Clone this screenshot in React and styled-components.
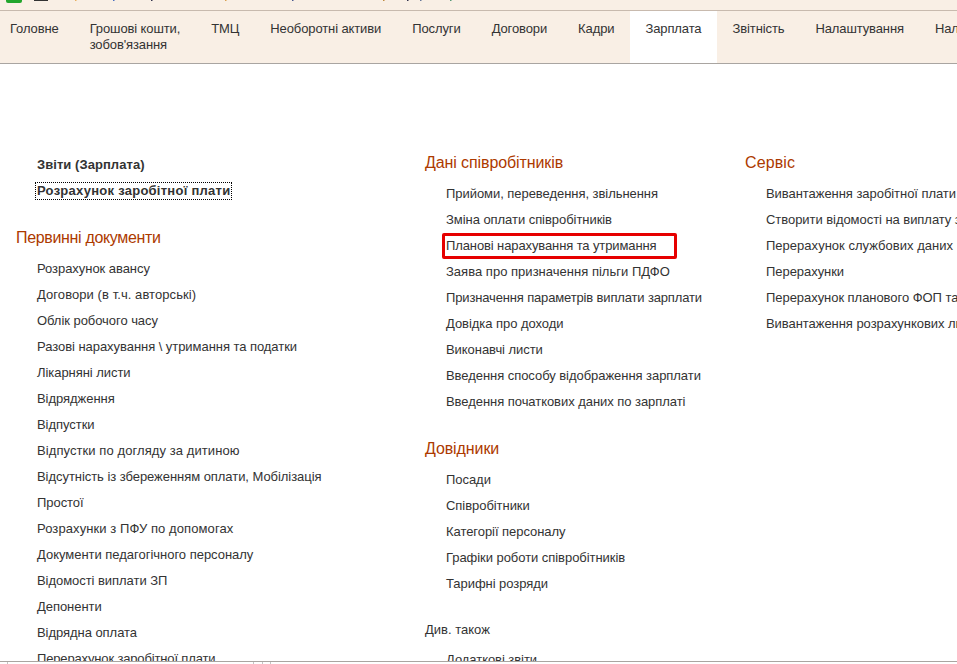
import React from "react";
import styled, { createGlobalStyle } from "styled-components";

const GlobalStyle = createGlobalStyle`
  html, body {
    margin: 0;
    padding: 0;
    background: #fff;
  }
`;

const Page = styled.div`
  display: flex;
  flex-direction: column;
  height: 100vh;
  overflow: hidden;
  font-family: "Liberation Sans", Arial, sans-serif;
  font-size: 13px;
  color: #333;
`;

const TopStrip = styled.div`
  flex: none;
  height: 10px;
  background: #f9efe5;
  border-bottom: 1px solid #c8baae;
  overflow: hidden;
`;

const TabBar = styled.nav`
  flex: none;
  display: flex;
  height: 52px;
  background: #f9efe5;
  border-bottom: 1px solid #a9a5a1;
  overflow: hidden;
  white-space: nowrap;
  letter-spacing: -0.11px;
`;

const Tab = styled.div`
  flex: none;
  padding: 10px 15.5px 0;
  line-height: 16px;
  background: ${(p) => (p.$active ? "#fff" : "transparent")};
  &:first-child {
    padding-left: 10px;
  }
`;

const Content = styled.main`
  flex: 1;
  min-height: 0;
  display: grid;
  grid-template-columns: 409px 320px 1fr;
  padding-left: 16px;
  overflow: hidden;
  white-space: nowrap;
`;

const Column = styled.section`
  padding-top: ${(p) => p.$top}px;
  min-width: 0;
`;

const Heading = styled.h2`
  margin: 21px 0 5px;
  height: 26px;
  font-size: 16px;
  font-weight: 400;
  line-height: 26px;
  color: #ad3a00;
  letter-spacing: ${(p) => p.$spacing ?? -0.1}px;
  &:first-child {
    margin-top: 0;
  }
`;

const SeeAlso = styled.div`
  margin: 20px 0 4px;
  line-height: 26px;
  height: 26px;
`;

const Links = styled.ul`
  list-style: none;
  margin: 0;
  padding: 0 0 0 21px;
`;

const Item = styled.li`
  position: relative;
  height: 26px;
  line-height: 26px;
  font-weight: ${(p) => (p.$bold ? 700 : 400)};
  letter-spacing: ${(p) => p.$spacing ?? -0.05}px;
`;

const Focused = styled.span`
  display: inline-block;
  margin-left: -2px;
  padding: 0 1px;
  line-height: 16px;
  letter-spacing: 0.26px;
  border: 1px dotted #000;
`;

const Highlight = styled.span`
  position: absolute;
  left: -4px;
  top: 0;
  width: 235px;
  height: 26px;
  box-sizing: border-box;
  border: 3px solid #e60000;
  border-radius: 2px;
`;

const Footer = styled.div`
  flex: none;
  height: 2px;
  background: #fff;
  border-top: 1px solid #a9a5a1;
  overflow: hidden;
`;

const cutOffMarks = [
  [75, "#e8b060"],
  [113, "#4a6fc0"],
  [151, "#33334d"],
  [225, "#d9a050"],
  [292, "#4a5a90"],
  [383, "#c08a40"],
  [407, "#33334d"],
  [420, "#667799"],
  [450, "#559977"],
];

// the window toolbar above the tabs is cut off at the top of the screenshot
const ToolbarRemains = () => (
  <svg width="957" height="10" style={{ display: "block" }}>
    <path d="M6 0h16v1a2 2 0 0 1-2 2H8a2 2 0 0 1-2-2z" fill="#22a52c" />
    <rect x="34" y="0" width="14" height="1" fill="#333" />
    {cutOffMarks.map(([x, c]) => (
      <rect key={x} x={x} y="0" width="1.5" height="1" fill={c} />
    ))}
  </svg>
);

// same for the status bar under the page, only its separators show
const StatusRemains = () => (
  <svg width="957" height="2" style={{ display: "block" }}>
    {[7, 253, 262, 270].map((x) => (
      <rect key={x} x={x} y="0" width="1" height="2" fill="#c4c4c4" />
    ))}
  </svg>
);

const tabs = [
  ["Головне"],
  ["Грошові кошти,", "зобов'язання"],
  ["ТМЦ"],
  ["Необоротні активи"],
  ["Послуги"],
  ["Договори"],
  ["Кадри"],
  ["Зарплата"],
  ["Звітність"],
  ["Налаштування"],
  ["Налаштування"],
];

// link text, optionally with the letter spacing that gets its width right
const documents = [
  ["Розрахунок авансу"],
  ["Договори (в т.ч. авторські)", 0.07],
  ["Облік робочого часу"],
  ["Разові нарахування \\ утримання та податки"],
  ["Лікарняні листи"],
  ["Відрядження"],
  ["Відпустки"],
  ["Відпустки по догляду за дитиною", 0.08],
  ["Відсутність із збереженням оплати, Мобілізація"],
  ["Простої"],
  ["Розрахунки з ПФУ по допомогах", 0.09],
  ["Документи педагогічного персоналу", -0.02],
  ["Відомості виплати ЗП"],
  ["Депоненти"],
  ["Відрядна оплата"],
  ["Перерахунок заробітної плати", -0.15],
];

const employees = [
  ["Прийоми, переведення, звільнення"],
  ["Зміна оплати співробітників"],
  ["Планові нарахування та утримання", -0.11],
  ["Заява про призначення пільги ПДФО", 0.02],
  ["Призначення параметрів виплати зарплати", -0.15],
  ["Довідка про доходи"],
  ["Виконавчі листи"],
  ["Введення способу відображення зарплати"],
  ["Введення початкових даних по зарплаті"],
];

const directories = [
  ["Посади"],
  ["Співробітники"],
  ["Категорії персоналу"],
  ["Графіки роботи співробітників"],
  ["Тарифні розряди"],
];

const service = [
  ["Вивантаження заробітної плати до банку"],
  ["Створити відомості на виплату зарплати"],
  ["Перерахунок службових даних", 0.02],
  ["Перерахунки"],
  ["Перерахунок планового ФОП та податків"],
  ["Вивантаження розрахункових листів"],
];

const LinkList = ({ items }) => (
  <Links>
    {items.map(([text, spacing]) => (
      <Item key={text} $spacing={spacing}>
        {text}
        {text.startsWith("Планові") && <Highlight />}
      </Item>
    ))}
  </Links>
);

const App = () => {
  return (
    <Page>
      <GlobalStyle />
      <TopStrip>
        <ToolbarRemains />
      </TopStrip>
      <TabBar>
        {tabs.map((lines, i) => (
          <Tab key={i} $active={lines[0] === "Зарплата"}>
            {lines.map((line) => (
              <div key={line}>{line}</div>
            ))}
          </Tab>
        ))}
      </TabBar>
      <Content>
        <Column $top={88}>
          <Links>
            <Item $bold $spacing={0.06}>
              Звіти (Зарплата)
            </Item>
            <Item $bold>
              <Focused>Розрахунок заробітної плати</Focused>
            </Item>
          </Links>
          <Heading $spacing={-0.33}>Первинні документи</Heading>
          <LinkList items={documents} />
        </Column>
        <Column $top={86}>
          <Heading>Дані співробітників</Heading>
          <LinkList items={employees} />
          <Heading>Довідники</Heading>
          <LinkList items={directories} />
          <SeeAlso>Див. також</SeeAlso>
          <LinkList items={[["Додаткові звіти"]]} />
        </Column>
        <Column $top={86}>
          <Heading $spacing={0.1}>Сервіс</Heading>
          <LinkList items={service} />
        </Column>
      </Content>
      <Footer>
        <StatusRemains />
      </Footer>
    </Page>
  );
};

export default App;
